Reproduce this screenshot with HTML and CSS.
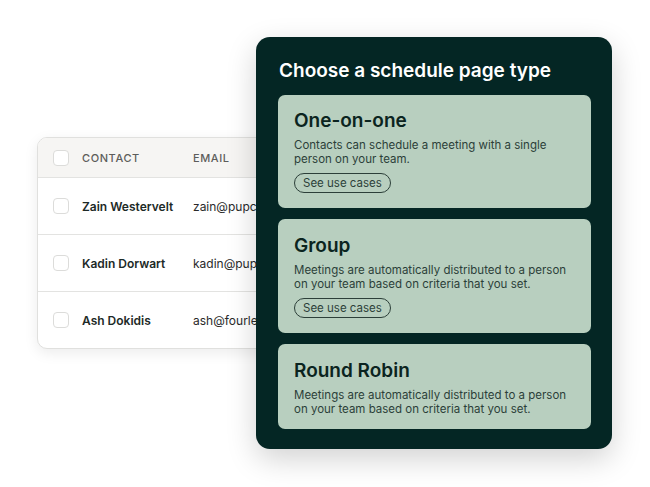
FILE: index.html
```html
<!DOCTYPE html>
<html lang="en">
<head>
  <meta charset="UTF-8" />
  <meta name="viewport" content="width=device-width, initial-scale=1.0" />
  <title>Scheduling pages</title>
  <link rel="stylesheet" href="styles.css">
</head>
<body>
  <div class="stage">
    <!-- contacts table sitting behind the picker -->
    <div class="contacts">
      <div class="row head">
        <span class="check"></span>
        <span class="col-name">Contact</span>
        <span class="col-email">Email</span>
      </div>
      <div class="row">
        <span class="check"></span>
        <span class="col-name">Zain Westervelt</span>
        <span class="col-email">zain@pupcuts.com</span>
      </div>
      <div class="row">
        <span class="check"></span>
        <span class="col-name">Kadin Dorwart</span>
        <span class="col-email">kadin@puppy.com</span>
      </div>
      <div class="row">
        <span class="check"></span>
        <span class="col-name">Ash Dokidis</span>
        <span class="col-email">ash@fourlegs.com</span>
      </div>
    </div>

    <div class="picker">
      <h1>Choose a schedule page type</h1>
      <div class="type-card">
        <h2>One-on-one</h2>
        <p>Contacts can schedule a meeting with a single person on your team.</p>
        <button class="use-cases">See use cases</button>
      </div>
      <div class="type-card">
        <h2>Group</h2>
        <p>Meetings are automatically distributed to a person on your team based on criteria that you set.</p>
        <button class="use-cases">See use cases</button>
      </div>
      <div class="type-card">
        <h2>Round Robin</h2>
        <p>Meetings are automatically distributed to a person on your team based on criteria that you set.</p>
      </div>
    </div>
  </div>
</body>
</html>
```

FILE: styles.css
```css
body {
  margin: 0;
  background: #ffffff;
  font-family: Inter, "Noto Sans", sans-serif;
  color: #1d2a27;
}
.stage {
  display: grid;
  width: 650px;
  height: 487px;
  overflow: hidden;
}
.contacts, .picker {
  grid-area: 1 / 1;
  align-self: start;
  justify-self: start;
}

/* table */
.contacts {
  margin: 137px 0 0 37px;
  width: 300px;
  background: #fff;
  border: 1px solid #e0e0de;
  border-radius: 10px;
  overflow: hidden;
  box-shadow: 0 4px 14px rgba(0,0,0,0.08);
}
.row {
  display: flex;
  align-items: center;
  height: 56px;
  border-top: 1px solid #e3e3e1;
  font-size: 12px;
}
.row.head {
  height: 39px;
  border-top: none;
  background: #f6f5f3;
  color: #5d5d5b;
  font-size: 11px;
  font-weight: 500;
  text-transform: uppercase;
  letter-spacing: 0.6px;
}
.check {
  width: 14px;
  height: 14px;
  margin-left: 15px;
  border: 1px solid #dcdcda;
  border-radius: 4px;
  background: #fff;
}
.col-name {
  margin-left: 13px;
  width: 111px;
  font-weight: 600;
  white-space: nowrap;
}
.head .col-name {
  font-weight: 500;
}
.col-email {
  white-space: nowrap;
  color: #2a2a2a;
}
.head .col-email {
  color: #5d5d5b;
}

/* picker panel */
.picker {
  margin: 37px 0 0 256px;
  width: 313px;
  padding: 22px 21px 20px 22px;
  background: #042624;
  border-radius: 14px;
  box-shadow: 0 10px 30px rgba(0,0,0,0.18);
  display: flex;
  flex-direction: column;
  gap: 11px;
}
.picker h1 {
  margin: 0 0 1px 1px;
  color: #fff;
  font-size: 19px;
  line-height: 24px;
  font-weight: 600;
}
.type-card {
  background: #b8cfbf;
  border-radius: 7px;
  padding: 15px 16px 15px;
}
.type-card:first-of-type {
  padding-top: 14px;
}
.type-card:last-child {
  padding-bottom: 13px;
}
.type-card h2 {
  margin: 0;
  font-size: 19px;
  line-height: 24px;
  font-weight: 600;
  color: #0b2420;
}
.type-card p {
  margin: 5px 0 0;
  font-size: 11.5px;
  line-height: 14px;
  color: #2c3f39;
}
.use-cases {
  display: block;
  margin-top: 7px;
  height: 20px;
  padding: 0 8px;
  border: 1px solid #2c3f39;
  border-radius: 10px;
  background: transparent;
  font-family: inherit;
  font-size: 11.5px;
  color: #2c3f39;
}
```
